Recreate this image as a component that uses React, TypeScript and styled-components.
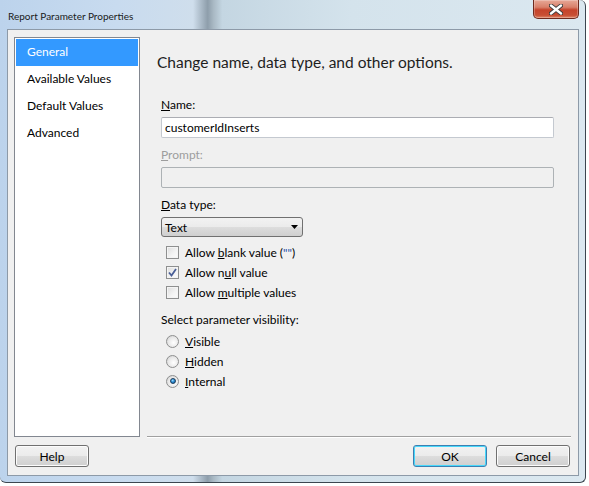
import React from "react";
import styled, { createGlobalStyle } from "styled-components";

const UI_FONT = `Lato, "Noto Sans", sans-serif`;

const GlobalStyle = createGlobalStyle`
	html, body {
		margin: 0;
		padding: 0;
		background: #ffffff;
	}
	body {
		font-family: ${UI_FONT};
		font-size: 12px;
		color: #000;
	}
`;

const Key = ({ children }: { children: React.ReactNode }) => <u>{children}</u>;

const App = () => {
	const [page, setPage] = React.useState(0);
	const [visibility, setVisibility] = React.useState("internal");
	const [checks, setChecks] = React.useState([false, true, false]);
	const pages = ["General", "Available Values", "Default Values", "Advanced"];

	const toggle = (i: number) =>
		setChecks((c) => c.map((v, j) => (j === i ? !v : v)));

	return (
		<>
			<GlobalStyle />
			<Frame>
				<TitleBar>
					<Title>Report Parameter Properties</Title>
					<CloseButton>
						<svg width="14" height="11" viewBox="0 0 14 11">
							<path
								d="M2 1.5 L12 9.5 M12 1.5 L2 9.5"
								stroke="#3b3b3b"
								strokeWidth="4.2"
								strokeLinecap="round"
							/>
							<path
								d="M2 1.5 L12 9.5 M12 1.5 L2 9.5"
								stroke="#ffffff"
								strokeWidth="2.4"
								strokeLinecap="round"
							/>
						</svg>
					</CloseButton>
				</TitleBar>
				<Client>
					<Body>
						<PageList>
							{pages.map((p, i) => (
								<PageItem key={p} selected={i === page} onClick={() => setPage(i)}>
									{p}
								</PageItem>
							))}
						</PageList>
						<Content>
							<Heading>Change name, data type, and other options.</Heading>
							<Form>
								<Label>
									<Key>N</Key>ame:
								</Label>
								<TextInput defaultValue="customerIdInserts" />
								<Label disabled>
									<Key>P</Key>rompt:
								</Label>
								<TextInput disabled />
								<Label>
									<Key>D</Key>ata type:
								</Label>
								<Select>
									<span>Text</span>
									<svg width="7" height="4" viewBox="0 0 7 4">
										<path d="M0 0 H7 L3.5 4 Z" fill="#000" />
									</svg>
								</Select>
								<OptionList>
									<OptionRow onClick={() => toggle(0)}>
										<CheckBox>
											{checks[0] && <CheckMark />}
										</CheckBox>
										<span>
											Allow <Key>b</Key>lank value (<Quote>""</Quote>)
										</span>
									</OptionRow>
									<OptionRow onClick={() => toggle(1)}>
										<CheckBox>
											{checks[1] && <CheckMark />}
										</CheckBox>
										<span>
											Allow n<Key>u</Key>ll value
										</span>
									</OptionRow>
									<OptionRow onClick={() => toggle(2)}>
										<CheckBox>
											{checks[2] && <CheckMark />}
										</CheckBox>
										<span>
											Allow <Key>m</Key>ultiple values
										</span>
									</OptionRow>
								</OptionList>
								<SectionLabel>Select parameter visibility:</SectionLabel>
								<RadioList>
									<OptionRow onClick={() => setVisibility("visible")}>
										<Radio checked={visibility === "visible"} />
										<span>
											<Key>V</Key>isible
										</span>
									</OptionRow>
									<OptionRow onClick={() => setVisibility("hidden")}>
										<Radio checked={visibility === "hidden"} />
										<span>
											<Key>H</Key>idden
										</span>
									</OptionRow>
									<OptionRow onClick={() => setVisibility("internal")}>
										<Radio checked={visibility === "internal"} />
										<span>
											<Key>I</Key>nternal
										</span>
									</OptionRow>
								</RadioList>
							</Form>
						</Content>
					</Body>
					<Footer>
						<Button>Help</Button>
						<Spacer />
						<Button primary>OK</Button>
						<Button>Cancel</Button>
					</Footer>
				</Client>
			</Frame>
		</>
	);
};

export default App;

const CheckMark = () => (
	<svg width="9" height="9" viewBox="0 0 9 9">
		<path
			d="M1 4.5 L3.5 7.5 L8 1"
			fill="none"
			stroke="#4a5f97"
			strokeWidth="1.8"
		/>
	</svg>
);

const Quote = styled.span`
	color: #1f4fa8;
`;

const Frame = styled.div`
	width: 586px;
	height: 483px;
	box-sizing: border-box;
	display: flex;
	flex-direction: column;
	border-right: 1px solid #3c4650;
	border-bottom: 1px solid #3c4650;
	border-radius: 0 6px 6px 6px;
	background: linear-gradient(
		90deg,
		#bcd3ec 0%,
		#c8dbef 20%,
		#cfdeec 33%,
		#8e9eab 35.5%,
		#a9b9c4 36.5%,
		#c4d6e2 38%,
		#d4e3ec 60%,
		#dbe8f0 100%
	);
	overflow: hidden;
`;

const TitleBar = styled.div`
	height: 29px;
	flex-shrink: 0;
	display: flex;
	align-items: flex-start;
	justify-content: space-between;
	padding-left: 8px;
	padding-right: 6px;
	box-sizing: border-box;
`;

const Title = styled.span`
	margin-top: 9px;
	font-size: 10px;
	line-height: 14px;
	color: #1a1a1a;
`;

const CloseButton = styled.div`
	width: 46px;
	height: 19px;
	box-sizing: border-box;
	display: flex;
	align-items: center;
	justify-content: center;
	border: 1px solid #6e2a1e;
	border-top: none;
	border-radius: 0 0 5px 5px;
	background: linear-gradient(
		180deg,
		#e7a897 0%,
		#d8806a 40%,
		#c5432b 55%,
		#c84f34 85%,
		#e08a6c 100%
	);
	box-shadow: inset 0 0 0 1px rgba(255, 255, 255, 0.25);
`;

const Client = styled.div`
	margin-left: 7px;
	width: 572px;
	height: 447px;
	box-sizing: border-box;
	border: 1px solid #8d9aa8;
	background: #f0f0f0;
	display: flex;
	flex-direction: column;
	padding: 7px 7px 0 6px;
`;

const Body = styled.div`
	height: 400px;
	display: flex;
	gap: 7px;
`;

const PageList = styled.div`
	width: 126px;
	box-sizing: border-box;
	border: 1px solid #828790;
	background: #ffffff;
	display: flex;
	flex-direction: column;
	padding: 1px 1px 0 1px;
`;

const PageItem = styled.div<{ selected: boolean }>`
	height: 27px;
	line-height: 26px;
	padding-left: 11px;
	font-size: 12px;
	color: ${(p) => (p.selected ? "#ffffff" : "#000000")};
	background: ${(p) => (p.selected ? "#3399ff" : "transparent")};
	cursor: default;
`;

const Content = styled.div`
	flex: 1;
	display: flex;
	flex-direction: column;
	padding-left: 10px;
	border-bottom: 1px solid #a0a0a0;
	box-shadow: 0 1px 0 #ffffff;
`;

const Heading = styled.div`
	margin-top: 15px;
	font-size: 15.5px;
	line-height: 20px;
	color: #1e1e1e;
`;

const Form = styled.div`
	display: flex;
	flex-direction: column;
	padding-left: 4px;
	width: 393px;
	margin-top: 25px;
`;

const Label = styled.div<{ disabled?: boolean }>`
	height: 16px;
	line-height: 16px;
	font-size: 12px;
	color: ${(p) => (p.disabled ? "#9d9d9d" : "#000000")};
	margin-bottom: 4px;

	input + & {
		margin-top: 9px;
	}
`;

const TextInput = styled.input`
	height: 21px;
	box-sizing: border-box;
	border: 1px solid #c4c9d0;
	border-top-color: #abadb3;
	border-radius: 2px;
	background: #ffffff;
	padding: 0 3px;
	font-family: ${UI_FONT};
	font-size: 12px;
	color: #000;
	outline: none;

	&:disabled {
		background: #f0f0f0;
		border-color: #adb2b5;
	}
`;

const Select = styled.div`
	width: 142px;
	height: 20px;
	box-sizing: border-box;
	border: 1px solid #707070;
	border-radius: 3px;
	background: linear-gradient(180deg, #f2f2f2 0%, #ebebeb 50%, #dddddd 51%, #cfcfcf 100%);
	display: flex;
	align-items: center;
	justify-content: space-between;
	padding: 0 4px 0 3px;
	font-size: 12px;
`;

const OptionList = styled.div`
	display: flex;
	flex-direction: column;
	margin-top: 5px;
`;

const RadioList = styled.div`
	display: flex;
	flex-direction: column;
	margin-top: 3px;
`;

const OptionRow = styled.div`
	height: 20px;
	display: flex;
	align-items: center;
	gap: 6px;
	padding-left: 5px;
	font-size: 12px;
	cursor: default;
`;

const CheckBox = styled.div`
	width: 13px;
	height: 13px;
	box-sizing: border-box;
	border: 1px solid #8e8f8f;
	background: linear-gradient(135deg, #dcdcdc 0%, #f4f4f4 60%, #fbfbfb 100%);
	box-shadow: inset 0 0 0 1px #f4f4f4;
	display: flex;
	align-items: center;
	justify-content: center;
`;

const Radio = styled.div<{ checked: boolean }>`
	width: 13px;
	height: 13px;
	box-sizing: border-box;
	border-radius: 50%;
	border: 1px solid #8e8f8f;
	background: radial-gradient(circle at 60% 60%, #ffffff 0%, #e8e8e8 55%, #c9c9c9 100%);
	display: flex;
	align-items: center;
	justify-content: center;

	&::after {
		content: "";
		display: ${(p) => (p.checked ? "block" : "none")};
		width: 6px;
		height: 6px;
		border-radius: 50%;
		border: 0.5px solid #1d3d5c;
		box-sizing: border-box;
		background: radial-gradient(circle at 40% 35%, #9fdcff 0%, #2b8fd6 45%, #0c4f8a 100%);
	}
`;

const SectionLabel = styled.div`
	margin-top: 10px;
	height: 16px;
	line-height: 16px;
	font-size: 12px;
`;

const Footer = styled.div`
	display: flex;
	align-items: center;
	gap: 9px;
	padding: 8px 1px 0 1px;
`;

const Spacer = styled.div`
	flex: 1;
`;

const Button = styled.button<{ primary?: boolean }>`
	width: 74px;
	height: 22px;
	box-sizing: border-box;
	border: 1px solid ${(p) => (p.primary ? "#3c7fb1" : "#707070")};
	border-radius: 3px;
	background: linear-gradient(180deg, #f2f2f2 0%, #ebebeb 50%, #dddddd 51%, #cfcfcf 100%);
	box-shadow: inset 0 0 0 1px ${(p) => (p.primary ? "#48d8fb" : "#fcfcfc")};
	font-family: ${UI_FONT};
	font-size: 12px;
	color: #000;
	padding: 0;
`;
